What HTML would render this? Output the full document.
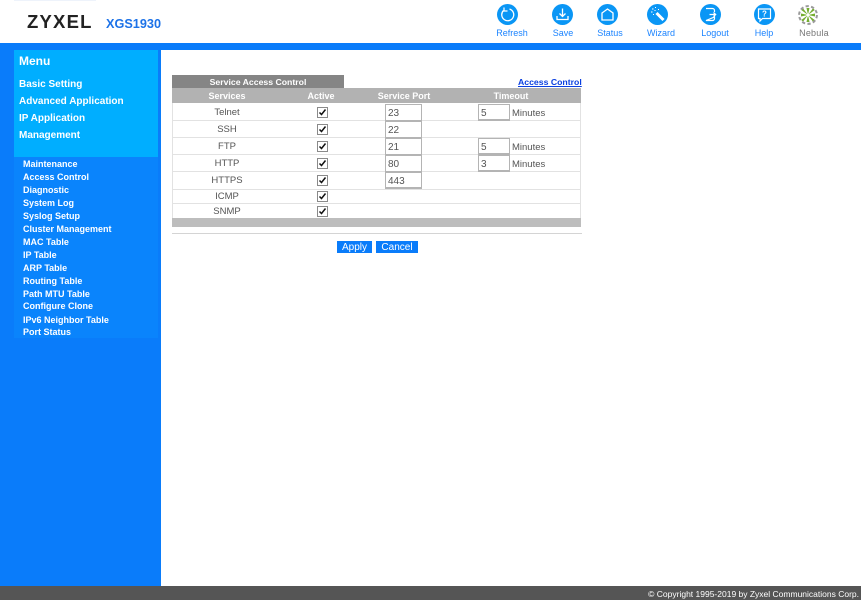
<!DOCTYPE html>
<html><head><meta charset="utf-8"><style>
html,body{margin:0;padding:0;width:861px;height:600px;overflow:hidden;background:#fff;font-family:"Liberation Sans",sans-serif}
#p{position:absolute;left:0;top:0;width:861px;height:600px;filter:blur(.3px)}
div,a,svg{position:absolute}
.t{white-space:nowrap;line-height:14px}
.m{color:#fff;font-weight:bold;font-size:10px;left:19px}
.s{color:#fff;font-weight:bold;font-size:9px;left:23px}
.n{color:#1c84ff;font-size:9px;text-align:center;width:60px;top:26px}
.h{color:#fff;font-weight:bold;font-size:9px;top:89px;text-align:center}
.c{color:#555;font-size:9.5px;text-align:center;left:172px;width:110px}
.l{left:172px;width:409px;height:1px;background:#e2e2e2}
.i{background:#fff;border:1px solid #b4b4b4;border-bottom-width:2px;box-sizing:border-box;color:#555;font-size:10px;padding-left:2px;line-height:17px;height:18px}
.k{left:317px;width:9px;height:9px;border:1px solid #8a8a8a;background:#fff}
.u{color:#555;font-size:9.5px;left:512px}
</style></head><body><div id="p">
<div style="left:14px;top:0;width:82px;height:1px;background:#eef3fb"></div>
<div class="t" style="left:27px;top:10px;font-size:18.5px;line-height:24px;font-weight:bold;color:#222;letter-spacing:1.2px">ZYXEL</div>
<div class="t" style="left:106px;top:17px;font-size:12.700px;font-weight:bold;color:#1c72e8">XGS1930</div>

<svg style="left:497px;top:4px" width="21" height="21" viewBox="0 0 21 21"><circle cx="10.500" cy="10.500" r="10.500" fill="#0a96f5"/><path d="M6.500 6.500A6 6 0 1 0 12.500 5" fill="none" stroke="#fff" stroke-width="1.300"/><path d="M7 3.500V7H10.500" fill="none" stroke="#fff" stroke-width="1.200"/></svg>
<svg style="left:552px;top:4px" width="21" height="21" viewBox="0 0 21 21"><circle cx="10.500" cy="10.500" r="10.500" fill="#0a96f5"/><path d="M10.500 4.500V12.500M7.500 9.500l3 3 3-3M5 12v3.500h11V12" fill="none" stroke="#fff" stroke-width="1.300"/></svg>
<svg style="left:597px;top:4px" width="21" height="21" viewBox="0 0 21 21"><circle cx="10.500" cy="10.500" r="10.500" fill="#0a96f5"/><path d="M5 9l5.500-4 5.500 4v7H5z" fill="none" stroke="#fff" stroke-width="1.300"/></svg>
<svg style="left:647px;top:4px" width="21" height="21" viewBox="0 0 21 21"><circle cx="10.500" cy="10.500" r="10.500" fill="#0a96f5"/><path d="M9.500 9l7 7" stroke="#fff" stroke-width="3"/><path d="M5 5h1.500M8 3.500h1M4 8h1.500M7.500 6.500h1M11 5.500h1M6 10.500h1" stroke="#fff" stroke-width="1.100"/></svg>
<svg style="left:700px;top:4px" width="21" height="21" viewBox="0 0 21 21"><circle cx="10.500" cy="10.500" r="10.500" fill="#0a96f5"/><path d="M6 4.500h6.500a2 2 0 0 1 2 2V8M14.500 13v1.500a2 2 0 0 1-2 2H6zM9.500 10.500h6M13.500 8.500l2.200 2-2.200 2" fill="none" stroke="#fff" stroke-width="1.200"/></svg>
<svg style="left:754px;top:4px" width="21" height="21" viewBox="0 0 21 21"><circle cx="10.500" cy="10.500" r="10.500" fill="#0a96f5"/><path d="M4.500 5h12v9.500H8.500L6 17v-2.500H4.500z" fill="none" stroke="#fff" stroke-width="1.200"/><text x="10.500" y="12.500" font-family="Liberation Sans" font-size="8" font-weight="bold" fill="#fff" text-anchor="middle">?</text></svg>
<svg style="left:798px;top:5px" width="20" height="20" viewBox="0 0 20 20"><g fill="#74ad2e"><path d="M8.500 3h3L10 10zM15 3.300l1.700 1.700L10 10zM17 8.500v3L10 10zM16.700 15L15 16.700 10 10zM11.500 17h-3L10 10zM5 16.700L3.300 15 10 10zM3 11.500v-3L10 10zM3.300 5L5 3.300 10 10z"/></g><circle cx="10" cy="10" r="8.900" fill="none" stroke="#9a9a9a" stroke-width="2" stroke-dasharray="3.300 2.300"/><circle cx="10" cy="10" r="1.500" fill="#fff"/></svg>

<div class="t n" style="left:482px">Refresh</div>
<div class="t n" style="left:533px">Save</div>
<div class="t n" style="left:580px">Status</div>
<div class="t n" style="left:631px">Wizard</div>
<div class="t n" style="left:685px">Logout</div>
<div class="t n" style="left:734px">Help</div>
<div class="t n" style="left:784px;color:#777;letter-spacing:.2px">Nebula</div>

<div style="left:0;top:43px;width:861px;height:7px;background:#0a7cfa"></div>
<div style="left:0;top:43px;width:161px;height:543px;background:#0a7cfa"></div>
<div style="left:14px;top:50px;width:144px;height:107px;background:#00aeff"></div>
<div style="left:14px;top:157px;width:144px;height:181px;background:#0a84fc"></div>

<div class="t" style="left:19px;top:54px;color:#fff;font-size:12px;font-weight:bold">Menu</div>
<div class="t m" style="top:78px">Basic Setting</div>
<div class="t m" style="top:95px">Advanced Application</div>
<div class="t m" style="top:112px">IP Application</div>
<div class="t m" style="top:129px">Management</div>

<div class="t s" style="top:157px">Maintenance</div>
<div class="t s" style="top:170px">Access Control</div>
<div class="t s" style="top:183px">Diagnostic</div>
<div class="t s" style="top:196px">System Log</div>
<div class="t s" style="top:209px">Syslog Setup</div>
<div class="t s" style="top:222px">Cluster Management</div>
<div class="t s" style="top:235px">MAC Table</div>
<div class="t s" style="top:248px">IP Table</div>
<div class="t s" style="top:261px">ARP Table</div>
<div class="t s" style="top:274px">Routing Table</div>
<div class="t s" style="top:287px">Path MTU Table</div>
<div class="t s" style="top:299px">Configure Clone</div>
<div class="t s" style="top:313px">IPv6 Neighbor Table</div>
<div class="t s" style="top:325px">Port Status</div>

<div style="left:172px;top:75px;width:172px;height:13px;background:#858585"></div>
<div class="t" style="left:172px;top:75px;width:172px;text-align:center;color:#fff;font-weight:bold;font-size:8.700px;line-height:14px">Service Access Control</div>
<a class="t" style="left:518px;top:75px;color:#0a3fe0;font-weight:bold;font-size:8.700px;text-decoration:underline">Access Control</a>

<div style="left:172px;top:88px;width:409px;height:15px;background:#b2b2b2"></div>
<div class="t h" style="left:172px;width:110px">Services</div>
<div class="t h" style="left:291px;width:60px">Active</div>
<div class="t h" style="left:364px;width:80px">Service Port</div>
<div class="t h" style="left:481px;width:60px">Timeout</div>

<div style="left:172px;top:103px;width:1px;height:115px;background:#e2e2e2"></div>
<div style="left:580px;top:103px;width:1px;height:115px;background:#e2e2e2"></div>
<div class="l" style="top:120px"></div><div class="l" style="top:137px"></div><div class="l" style="top:154px"></div><div class="l" style="top:171px"></div><div class="l" style="top:189px"></div><div class="l" style="top:203px"></div>

<div class="t c" style="top:106px">Telnet</div>
<div class="t c" style="top:123px">SSH</div>
<div class="t c" style="top:140px">FTP</div>
<div class="t c" style="top:157px">HTTP</div>
<div class="t c" style="top:174px">HTTPS</div>
<div class="t c" style="top:190px">ICMP</div>
<div class="t c" style="top:205px">SNMP</div>

<div class="k" style="top:107px"></div><div class="k" style="top:124px"></div><div class="k" style="top:141px"></div><div class="k" style="top:158px"></div><div class="k" style="top:175px"></div><div class="k" style="top:191px"></div><div class="k" style="top:206px"></div>
<svg style="left:317px;top:107px" width="11" height="115" viewBox="0 0 11 115"><g fill="none" stroke="#111" stroke-width="1.500"><path d="M2.500 5.500l2 2 4-5"/><path d="M2.500 22.500l2 2 4-5"/><path d="M2.500 39.500l2 2 4-5"/><path d="M2.500 56.500l2 2 4-5"/><path d="M2.500 73.500l2 2 4-5"/><path d="M2.500 89.500l2 2 4-5"/><path d="M2.500 104.500l2 2 4-5"/></g></svg>

<div class="i t" style="left:385px;top:104px;width:37px">23</div>
<div class="i t" style="left:385px;top:121px;width:37px">22</div>
<div class="i t" style="left:385px;top:138px;width:37px">21</div>
<div class="i t" style="left:385px;top:155px;width:37px">80</div>
<div class="i t" style="left:385px;top:172px;width:37px;height:17px">443</div>
<div class="i t" style="left:478px;top:104px;width:32px;height:17px">5</div>
<div class="i t" style="left:478px;top:138px;width:32px;height:17px">5</div>
<div class="i t" style="left:478px;top:155px;width:32px;height:17px">3</div>
<div class="t u" style="top:107px">Minutes</div>
<div class="t u" style="top:141px">Minutes</div>
<div class="t u" style="top:158px">Minutes</div>

<div style="left:172px;top:218px;width:409px;height:9px;background:#bdbdbd"></div>
<div style="left:172px;top:233px;width:410px;height:1px;background:#d4d4d4"></div>

<div class="t" style="left:337px;top:241px;width:35px;height:12px;background:#0a7cfa;color:#fff;font-size:10px;line-height:13px;text-align:center">Apply</div>
<div class="t" style="left:376px;top:241px;width:42px;height:12px;background:#0a7cfa;color:#fff;font-size:10px;line-height:13px;text-align:center">Cancel</div>

<div style="left:0;top:586px;width:861px;height:14px;background:#555"></div>
<div class="t" style="right:2px;top:587px;color:#fff;font-size:8.500px">© Copyright 1995-2019 by Zyxel Communications Corp.</div>
</div></body></html>
